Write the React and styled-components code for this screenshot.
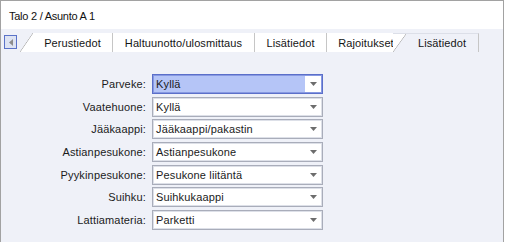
import React from 'react';
import styled, { createGlobalStyle } from 'styled-components';

const STRIP_BG = '#eff1f8';

const Global = createGlobalStyle`
  html, body { margin: 0; padding: 0; background: #fff; }
  body { font-family: "Liberation Sans", Arial, sans-serif; }
  * { box-sizing: border-box; }
`;

const Window = styled.div`
  width: 504px;
  height: 242px;
  border: 1px solid #a2a2a2;
  border-bottom: none;
  display: flex;
  flex-direction: column;
  background: ${STRIP_BG};
  overflow: hidden;
`;

const Header = styled.div`
  height: 28px;
  flex: none;
  background: #fff;
  display: flex;
  align-items: center;
  padding: 1px 0 0 8px;
  font-size: 11px;
  letter-spacing: -0.25px;
  color: #111;
`;

const TabStrip = styled.div`
  height: 23px;
  flex: none;
  display: flex;
  align-items: flex-start;
  padding: 4px 0 0 3px;
`;

const ScrollButton = styled.div`
  width: 13px;
  height: 14px;
  margin-top: 2px;
  border: 1px solid #5a72c8;
  background: #dde3f3;
  display: flex;
  align-items: center;
  justify-content: center;
`;

const Tabs = styled.div`
  display: flex;
  margin-left: 3px;
`;

const Tab = styled.div`
  width: ${p => p.$w}px;
  height: 19px;
  display: flex;
  align-items: center;
  justify-content: center;
  padding-left: ${p => (p.$slant ? 13 : 0)}px;
  margin-left: ${p => (p.$active ? -13 : 0)}px;
  position: ${p => (p.$active ? 'relative' : 'static')};
  border-right: 1px solid #c6c6c6;
  border-top: ${p => (p.$active ? '1px solid #dcdfe8' : 'none')};
  font-size: 11px;
  letter-spacing: 0.1px;
  color: #151515;
  white-space: nowrap;
  background: ${p =>
    p.$active
      ? `linear-gradient(to bottom right, #fff calc(50% - 0.6px), #b4b4b4 50%, ${STRIP_BG} calc(50% + 0.7px)) left top / 13px 100% no-repeat, ${STRIP_BG}`
      : p.$slant
      ? `linear-gradient(to bottom right, ${STRIP_BG} calc(50% - 0.6px), #b4b4b4 50%, #fff calc(50% + 0.7px)) left top / 13px 100% no-repeat, #fff`
      : '#fff'};
`;

const Content = styled.div`
  flex: 1;
  padding: 22px 0 0 59px;
`;

const Form = styled.div`
  display: grid;
  grid-template-columns: 86px 171px;
  grid-auto-rows: 20px;
  column-gap: 6px;
  row-gap: 2.67px;
`;

const Label = styled.div`
  align-self: center;
  text-align: right;
  white-space: nowrap;
  font-size: 11px;
  letter-spacing: 0.15px;
  color: #1b1b1b;
`;

const Combo = styled.div`
  height: 20px;
  display: flex;
  align-items: stretch;
  border: 1px solid ${p => (p.$focused ? '#5b6fc9' : '#a9adba')};
  box-shadow: inset 0 0 0 1px ${p => (p.$focused ? '#8799e2' : '#dde0e8')};
  background: ${p => (p.$focused ? '#b5c5f7' : '#fff')};
`;

const Value = styled.div`
  flex: 1;
  display: flex;
  align-items: center;
  padding-left: 3px;
  font-size: 11px;
  letter-spacing: 0.15px;
  color: #1b1b1b;
  white-space: nowrap;
  overflow: hidden;
`;

const ArrowBox = styled.div`
  width: 16px;
  margin: 1px 1px 1px 0;
  background: #fff;
  display: flex;
  align-items: center;
  justify-content: center;
`;

const DownArrow = () => (
  <svg width="7" height="4" viewBox="0 0 7 4">
    <polygon points="0,0 7,0 3.5,4" fill="#6d6d6d" />
  </svg>
);

const LeftArrow = () => (
  <svg width="4" height="7" viewBox="0 0 4 7">
    <polygon points="4,0 4,7 0,3.5" fill="#8c8c8c" />
  </svg>
);

const tabs = [
  { label: 'Perustiedot', w: 93, slant: true },
  { label: 'Haltuunotto/ulosmittaus', w: 142 },
  { label: 'Lisätiedot', w: 72 },
  { label: 'Rajoitukset', w: 79 },
  { label: 'Lisätiedot', w: 86, slant: true, active: true },
];

const fields = [
  ['Parveke:', 'Kyllä', true],
  ['Vaatehuone:', 'Kyllä'],
  ['Jääkaappi:', 'Jääkaappi/pakastin'],
  ['Astianpesukone:', 'Astianpesukone'],
  ['Pyykinpesukone:', 'Pesukone liitäntä'],
  ['Suihku:', 'Suihkukaappi'],
  ['Lattiamateria:', 'Parketti'],
];

export default function App() {
  return (
    <>
      <Global />
      <Window>
        <Header>Talo 2 / Asunto A 1</Header>
        <TabStrip>
          <ScrollButton>
            <LeftArrow />
          </ScrollButton>
          <Tabs>
            {tabs.map((t, i) => (
              <Tab key={i} $w={t.w} $slant={t.slant} $active={t.active}>
                {t.label}
              </Tab>
            ))}
          </Tabs>
        </TabStrip>
        <Content>
          <Form>
            {fields.map(([label, value, focused]) => (
              <React.Fragment key={label}>
                <Label>{label}</Label>
                <Combo $focused={focused}>
                  <Value>{value}</Value>
                  <ArrowBox>
                    <DownArrow />
                  </ArrowBox>
                </Combo>
              </React.Fragment>
            ))}
          </Form>
        </Content>
      </Window>
    </>
  );
}
